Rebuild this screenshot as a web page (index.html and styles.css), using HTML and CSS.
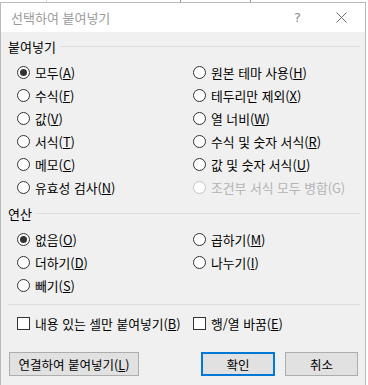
FILE: index.html
```html
<!DOCTYPE html>
<html lang="ko">
<head>
<meta charset="UTF-8" />
<title>선택하여 붙여넣기</title>
<link rel="stylesheet" href="styles.css">
</head>
<body>
    <div class="desk">
        <div class="dialog">
            <header class="titlebar">
                <span class="title">선택하여 붙여넣기</span>
                <span class="help">?</span>
                <span class="close">
                    <svg width="11" height="11" viewBox="0 0 11 11"><path d="M0.5 0.5L10.5 10.5M10.5 0.5L0.5 10.5" stroke="#6e6e6e" stroke-width="1" fill="none"/></svg>
                </span>
            </header>

            <div class="content">
                <div class="group-head"><span>붙여넣기</span><i class="rule"></i></div>
                <div class="options">
                    <label class="opt"><span class="radio on"></span>모두(<u>A</u>)</label>
                    <label class="opt"><span class="radio"></span>원본 테마 사용(<u>H</u>)</label>
                    <label class="opt"><span class="radio"></span>수식(<u>F</u>)</label>
                    <label class="opt"><span class="radio"></span>테두리만 제외(<u>X</u>)</label>
                    <label class="opt"><span class="radio"></span>값(<u>V</u>)</label>
                    <label class="opt"><span class="radio"></span>열 너비(<u>W</u>)</label>
                    <label class="opt"><span class="radio"></span>서식(<u>T</u>)</label>
                    <label class="opt"><span class="radio"></span>수식 및 숫자 서식(<u>R</u>)</label>
                    <label class="opt"><span class="radio"></span>메모(<u>C</u>)</label>
                    <label class="opt"><span class="radio"></span>값 및 숫자 서식(<u>U</u>)</label>
                    <label class="opt"><span class="radio"></span>유효성 검사(<u>N</u>)</label>
                    <label class="opt disabled"><span class="radio"></span>조건부 서식 모두 병합(G)</label>
                </div>

                <div class="group-head"><span>연산</span><i class="rule"></i></div>
                <div class="options">
                    <label class="opt"><span class="radio on"></span>없음(<u>O</u>)</label>
                    <label class="opt"><span class="radio"></span>곱하기(<u>M</u>)</label>
                    <label class="opt"><span class="radio"></span>더하기(<u>D</u>)</label>
                    <label class="opt"><span class="radio"></span>나누기(<u>I</u>)</label>
                    <label class="opt"><span class="radio"></span>빼기(<u>S</u>)</label>
                </div>

                <hr class="sep" />

                <div class="options checks">
                    <label class="opt"><span class="check"></span>내용 있는 셀만 붙여넣기(<u>B</u>)</label>
                    <label class="opt"><span class="check"></span>행/열 바꿈(<u>E</u>)</label>
                </div>

                <div class="buttons">
                    <button class="btn wide">연결하여 붙여넣기(<u>L</u>)</button>
                    <span class="spacer"></span>
                    <button class="btn default">확인</button>
                    <button class="btn">취소</button>
                </div>
            </div>
        </div>
    </div>
</body>
</html>
```

FILE: styles.css
```css
* {
    margin:0px;
    padding:0px;
    box-sizing:border-box;
}

body {
    width:368px;
    height:385px;
    overflow:hidden;
    font-family:'Noto Sans CJK KR', 'Noto Sans', sans-serif;
    font-size:12px;
    color:#000;
    background-color:#fff;
}

.desk {
    height:385px;
    padding-top:2px;
    background-color:#fff;
    background-image:linear-gradient(#dadada, #dadada), linear-gradient(#6fa877, #6fa877), linear-gradient(#6fa877, #6fa877);
    background-size:1px 3px, 1px 3px, 1px 3px;
    background-position:46px 0px, 180px 0px, 250px 0px;
    background-repeat:no-repeat;
}

.dialog {
    width:366px;
    height:400px;
    border:1px solid #b9b9b9;
    border-bottom:none;
    background-color:#f0f0f0;
}

.titlebar {
    display:flex;
    align-items:center;
    height:29px;
    padding-left:10px;
    background-color:#fff;
}

.title {
    flex:1;
    font-size:13px;
    color:#9b9b9b;
}

.help {
    width:42px;
    font-family:'Segoe UI', 'DejaVu Sans', sans-serif;
    font-size:13px;
    color:#8a8a8a;
}

.close {
    display:flex;
    width:29px;
}

.content {
    padding:0px 5px 0px 7px;
}

.group-head {
    display:flex;
    align-items:center;
    height:29px;
}

.group-head span {
    font-size:13px;
    margin-right:4px;
}

.rule {
    flex:1;
    height:1px;
    margin-top:-1px;
    background-color:#dcdcdc;
}

.options {
    display:grid;
    grid-template-columns:176px 1fr;
    grid-auto-rows:23px;
    padding-left:9px;
    font-size:12.8px;
}

.opt {
    display:flex;
    align-items:center;
    white-space:nowrap;
}

.opt u {
    text-underline-offset:1px;
}

.disabled {
    color:#b3b3b3;
}

.radio {
    position:relative;
    width:13px;
    height:13px;
    margin-right:5px;
    border:1px solid #333;
    border-radius:50%;
    background-color:#fff;
}

.radio.on:after {
    content:"";
    position:absolute;
    left:2px;
    top:2px;
    width:7px;
    height:7px;
    border-radius:50%;
    background-color:#333;
}

.disabled .radio {
    border-color:#c4c4c4;
}

.check {
    width:13px;
    height:13px;
    margin-right:5px;
    border:1px solid #333;
    background-color:#fff;
}

.sep {
    height:1px;
    margin:7px 0px 7px 0px;
    border:none;
    background-color:#dcdcdc;
}

.buttons {
    display:flex;
    margin-top:17px;
    padding-right:2px;
}

.spacer {
    flex:1;
}

.btn {
    height:24px;
    width:73px;
    margin-left:10px;
    font-family:inherit;
    font-size:12.5px;
    color:#000;
    border:1px solid #adadad;
    background-color:#e1e1e1;
}

.btn.wide {
    width:130px;
    margin-left:1px;
}

.btn.default {
    width:74px;
    border:2px solid #0078d7;
}
```
